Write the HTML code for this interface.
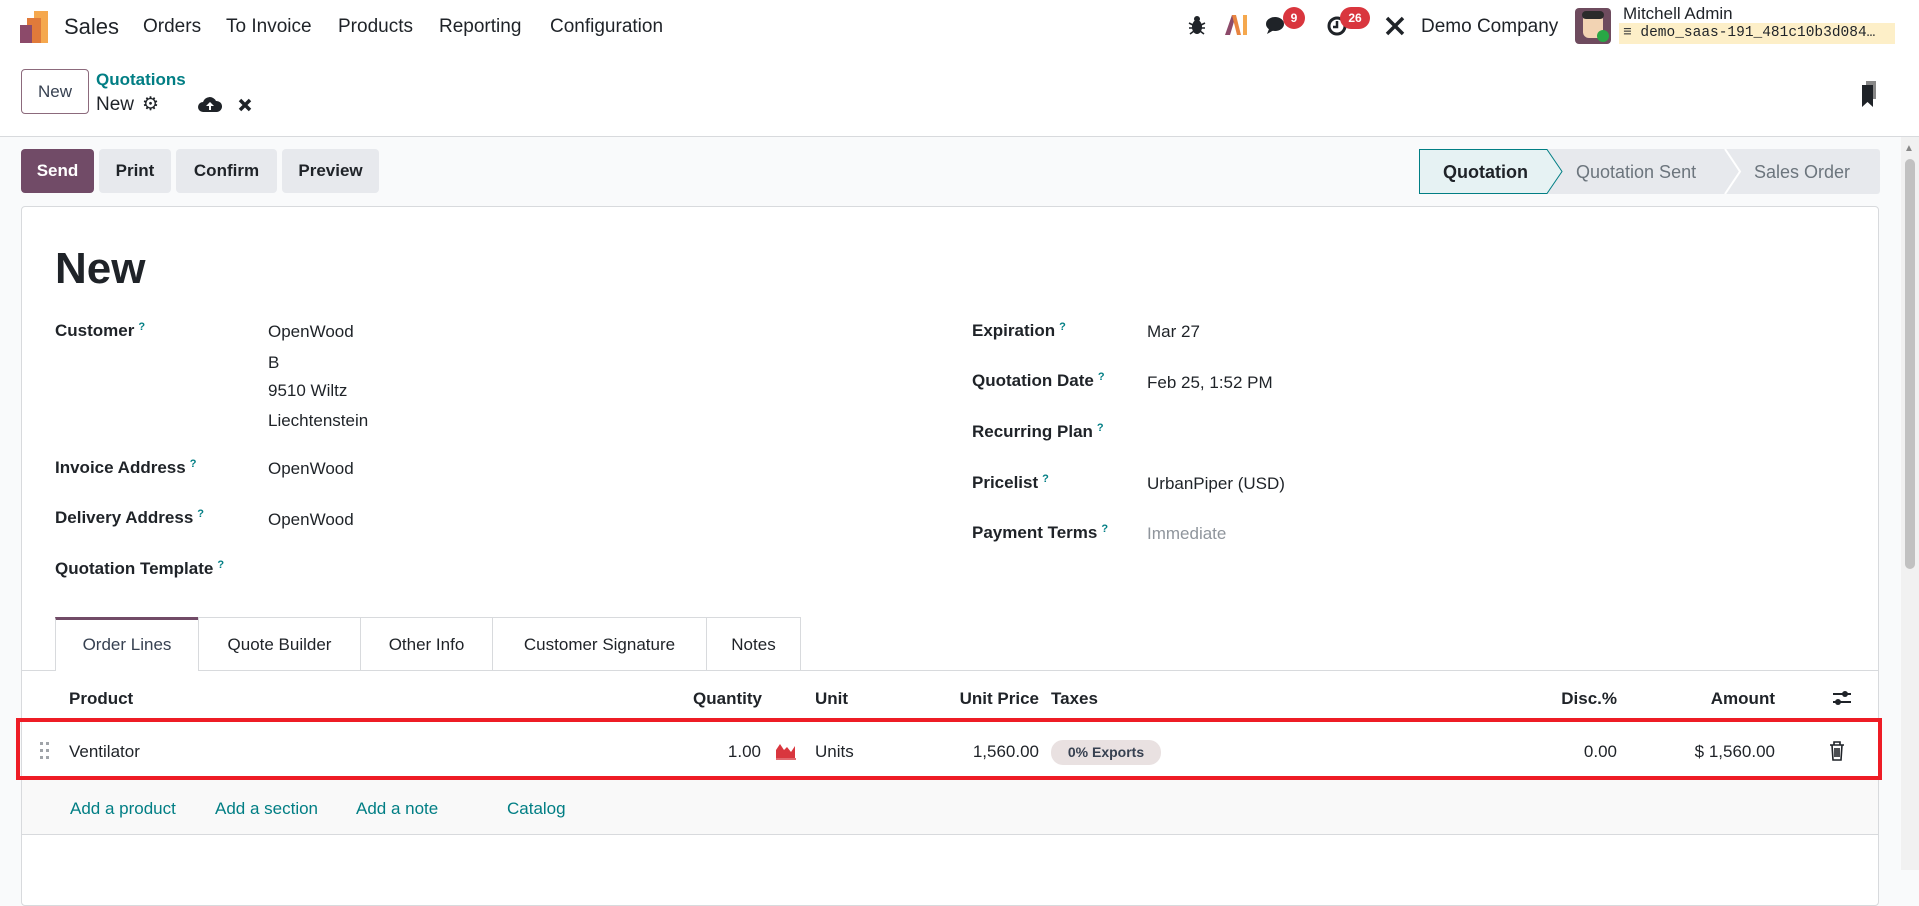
<!DOCTYPE html>
<html><head><meta charset="utf-8"><style>
*{box-sizing:border-box;margin:0;padding:0}
body{width:1919px;height:870px;overflow:hidden;background:#f9fafb;font-family:"Liberation Sans",sans-serif;font-size:17px;color:#1f2328;position:relative}
.a{position:absolute;white-space:nowrap}
.nav{position:absolute;left:0;top:0;width:1919px;height:52px;background:#fff}
.cp{position:absolute;left:0;top:52px;width:1919px;height:85px;background:#fff;border-bottom:1px solid #d8dadd}
.btn{position:absolute;top:149px;height:44px;border-radius:4px;background:#e7e9ed;font-weight:bold;font-size:17px;line-height:44px;text-align:center;color:#1f2328}
.sheet{position:absolute;left:21px;top:206px;width:1858px;height:700px;background:#fff;border:1px solid #d8dadd;border-radius:4px}
.lbl{font-weight:bold}
.q{color:#017e84;font-size:11px;font-weight:bold;vertical-align:top;margin-left:4px}
.tab{position:absolute;top:617px;height:53px;line-height:53px;text-align:center;border:1px solid #d8dadd;border-bottom:none;background:#fff;font-size:17px}
.th{font-weight:bold;top:689px}
.lnk{color:#017e84;top:799px}
</style></head><body>
<div class="nav"></div>
<svg class="a" style="left:20px;top:11px" width="30" height="32" viewBox="0 0 30 32"><rect x="14" y="0" width="14" height="32" fill="#f5a84e"/><rect x="7" y="7" width="14" height="25" fill="#e07a3a"/><rect x="0" y="14" width="12" height="18" fill="#8c4a6a"/></svg>
<div class="a" style="left:64px;top:14px;font-size:22px">Sales</div>
<div class="a" style="left:143px;top:16px;font-size:19px">Orders</div>
<div class="a" style="left:226px;top:16px;font-size:19px">To Invoice</div>
<div class="a" style="left:338px;top:16px;font-size:19px">Products</div>
<div class="a" style="left:439px;top:16px;font-size:19px">Reporting</div>
<div class="a" style="left:550px;top:16px;font-size:19px">Configuration</div>
<svg class="a" style="left:1188px;top:15px" width="18" height="20"><ellipse cx="9" cy="12" rx="5" ry="7" fill="#1f2328"/><circle cx="9" cy="4" r="3" fill="#1f2328"/><path d="M1 8l4 2M17 8l-4 2M1 13h4M17 13h-4M2 19l4-3M16 19l-4-3" stroke="#1f2328" stroke-width="1.6"/></svg>
<svg class="a" style="left:1224px;top:14px" width="24" height="22"><path d="M1 21L8 1h4l-6 20z" fill="#8c4a6a"/><path d="M8 1h4l5 20h-4z" fill="#e8843f"/><rect x="19" y="1" width="4" height="20" fill="#f5a84e"/></svg>
<svg class="a" style="left:1265px;top:14px" width="24" height="22"><ellipse cx="10" cy="10" rx="9" ry="7" fill="#1f2328"/><path d="M4 15 L2 20 L9 16Z" fill="#1f2328"/></svg>
<div class="a" style="left:1283px;top:7px;width:22px;height:22px;border-radius:11px;background:#d9363e;color:#fff;font-size:12px;font-weight:bold;text-align:center;line-height:22px">9</div>
<svg class="a" style="left:1326px;top:15px" width="22" height="22"><circle cx="11" cy="11" r="8" fill="none" stroke="#1f2328" stroke-width="3"/><path d="M11 6v6h-4" stroke="#1f2328" stroke-width="2.5" fill="none"/></svg>
<div class="a" style="left:1340px;top:7px;width:30px;height:22px;border-radius:11px;background:#d9363e;color:#fff;font-size:12px;font-weight:bold;text-align:center;line-height:22px">26</div>
<svg class="a" style="left:1384px;top:15px" width="22" height="22"><path d="M3 3l16 16M19 3L3 19" stroke="#1f2328" stroke-width="3.5"/></svg>
<div class="a" style="left:1421px;top:16px;font-size:19px">Demo Company</div>
<div class="a" style="left:1575px;top:8px;width:36px;height:36px;border-radius:4px;background:#6e4b5e;overflow:hidden"><div style="position:absolute;left:8px;top:6px;width:20px;height:24px;border-radius:6px;background:#f2d3b3"></div><div style="position:absolute;left:7px;top:3px;width:22px;height:8px;background:#2b2b2b;border-radius:4px"></div><div style="position:absolute;left:22px;top:22px;width:12px;height:12px;background:#28a745;border-radius:6px"></div></div>
<div class="a" style="left:1623px;top:4px;font-size:17px">Mitchell Admin</div>
<div class="a" style="left:1619px;top:23px;width:276px;height:21px;background:#fdefc8;font-family:'Liberation Mono',monospace;font-size:14.5px;line-height:21px;padding-left:4px;overflow:hidden">≡ demo_saas-191_481c10b3d084…</div>

<div class="cp"></div>
<div class="a" style="left:21px;top:69px;width:68px;height:45px;border:1px solid #8c6a7c;border-radius:4px;text-align:center;line-height:43px;font-size:17px;color:#374151">New</div>
<div class="a" style="left:96px;top:70px;color:#017e84;font-weight:bold;font-size:17px">Quotations</div>
<div class="a" style="left:96px;top:94px;font-size:19px">New</div>
<div class="a" style="left:142px;top:93px;font-size:19px">⚙</div>
<svg class="a" style="left:198px;top:95px" width="24" height="18"><path d="M5 17a5 5 0 0 1 0-10 7 7 0 0 1 13-1 5 5 0 0 1 1 11z" fill="#1f2328"/><path d="M12 7l-4 4h3v4h2v-4h3z" fill="#fff"/></svg>
<svg class="a" style="left:238px;top:98px" width="14" height="14"><path d="M2 2l10 10M12 2L2 12" stroke="#1f2328" stroke-width="3.5"/></svg>
<svg class="a" style="left:1860px;top:80px" width="22" height="28"><rect x="6" y="1" width="10" height="18" fill="#888"/><path d="M2 5h11v22l-5.5-5-5.5 5z" fill="#1f2328"/></svg>

<div class="btn" style="left:21px;width:73px;background:#714b67;color:#fff">Send</div>
<div class="btn" style="left:99px;width:72px">Print</div>
<div class="btn" style="left:176px;width:101px">Confirm</div>
<div class="btn" style="left:282px;width:97px">Preview</div>

<svg class="a" style="left:1419px;top:149px" width="461" height="45">
<rect x="0" y="0" width="461" height="45" rx="3" fill="#e7e9ed"/>
<path d="M0.5 0.5H128L143 22.5L128 44.5H0.5Z" fill="#e6f2f3" stroke="#017e84"/>
<path d="M306 0L321 22.5L306 45" fill="none" stroke="#fff" stroke-width="2"/>
</svg>
<div class="a" style="left:1443px;top:162px;font-weight:bold;font-size:18px">Quotation</div>
<div class="a" style="left:1576px;top:162px;font-size:18px;color:#6c757d">Quotation Sent</div>
<div class="a" style="left:1754px;top:162px;font-size:18px;color:#6c757d">Sales Order</div>

<div class="a" style="left:1901px;top:137px;width:18px;height:733px;background:#f1f1f1"></div>
<div class="a" style="left:1905px;top:159px;width:10px;height:410px;border-radius:5px;background:#c1c1c1"></div>
<div class="a" style="left:1904px;top:143px;font-size:10px;color:#888">▲</div>

<div class="sheet"></div>
<div class="a" style="left:55px;top:244px;font-size:44px;font-weight:bold">New</div>

<div class="a lbl" style="left:55px;top:321px">Customer<span class="q">?</span></div>
<div class="a" style="left:268px;top:322px">OpenWood</div>
<div class="a" style="left:268px;top:353px">B</div>
<div class="a" style="left:268px;top:381px">9510 Wiltz</div>
<div class="a" style="left:268px;top:411px">Liechtenstein</div>
<div class="a lbl" style="left:55px;top:458px">Invoice Address<span class="q">?</span></div>
<div class="a" style="left:268px;top:459px">OpenWood</div>
<div class="a lbl" style="left:55px;top:508px">Delivery Address<span class="q">?</span></div>
<div class="a" style="left:268px;top:510px">OpenWood</div>
<div class="a lbl" style="left:55px;top:559px">Quotation Template<span class="q">?</span></div>

<div class="a lbl" style="left:972px;top:321px">Expiration<span class="q">?</span></div>
<div class="a" style="left:1147px;top:322px">Mar 27</div>
<div class="a lbl" style="left:972px;top:371px">Quotation Date<span class="q">?</span></div>
<div class="a" style="left:1147px;top:373px">Feb 25, 1:52 PM</div>
<div class="a lbl" style="left:972px;top:422px">Recurring Plan<span class="q">?</span></div>
<div class="a lbl" style="left:972px;top:473px">Pricelist<span class="q">?</span></div>
<div class="a" style="left:1147px;top:474px">UrbanPiper (USD)</div>
<div class="a lbl" style="left:972px;top:523px">Payment Terms<span class="q">?</span></div>
<div class="a" style="left:1147px;top:524px;color:#8f959c">Immediate</div>

<div class="a" style="left:21px;top:670px;width:1858px;height:1px;background:#d8dadd"></div>
<div class="tab" style="left:55px;width:144px;border-top:3px solid #714b67;color:#374151;height:54px;line-height:50px">Order Lines</div>
<div class="tab" style="left:198px;width:163px">Quote Builder</div>
<div class="tab" style="left:360px;width:133px">Other Info</div>
<div class="tab" style="left:492px;width:215px">Customer Signature</div>
<div class="tab" style="left:706px;width:95px">Notes</div>

<div class="a th" style="left:69px">Product</div>
<div class="a th" style="right:1157px">Quantity</div>
<div class="a th" style="left:815px">Unit</div>
<div class="a th" style="right:880px">Unit Price</div>
<div class="a th" style="left:1051px">Taxes</div>
<div class="a th" style="right:302px">Disc.%</div>
<div class="a th" style="right:144px">Amount</div>
<svg class="a" style="left:1832px;top:688px" width="20" height="20"><path d="M1 6h18M1 14h18" stroke="#1f2328" stroke-width="2"/><circle cx="13" cy="6" r="3" fill="#1f2328"/><circle cx="6" cy="14" r="3" fill="#1f2328"/></svg>

<div class="a" style="left:22px;top:721px;width:1857px;height:57px;background:#fff;border-top:1px solid #e5e7ea"></div>
<div class="a" style="left:22px;top:779px;width:1856px;height:56px;background:#f9f9f9;border-bottom:1px solid #d8dadd"></div>
<div class="a" style="left:16px;top:718px;width:1866px;height:62px;border:4px solid #ee1c25"></div>
<svg class="a" style="left:40px;top:742px" width="10" height="18"><g fill="#a0a4a9"><rect x="0" y="0" width="3" height="3"/><rect x="6" y="0" width="3" height="3"/><rect x="0" y="7" width="3" height="3"/><rect x="6" y="7" width="3" height="3"/><rect x="0" y="14" width="3" height="3"/><rect x="6" y="14" width="3" height="3"/></g></svg>
<div class="a" style="left:69px;top:742px">Ventilator</div>
<div class="a" style="right:1158px;top:742px">1.00</div>
<svg class="a" style="left:775px;top:742px" width="22" height="18"><path d="M1 16V8l4-6 4 6 3-3 4 5 4-6v12z" fill="#d9363e"/><path d="M1 17h20" stroke="#d9363e" stroke-width="1.5"/></svg>
<div class="a" style="left:815px;top:742px">Units</div>
<div class="a" style="right:880px;top:742px">1,560.00</div>
<div class="a" style="left:1051px;top:740px;width:110px;height:25px;line-height:25px;text-align:center;font-size:14px;font-weight:bold;color:#374151;background:#e9e1e1;border-radius:12px">0% Exports</div>
<div class="a" style="right:302px;top:742px">0.00</div>
<div class="a" style="right:144px;top:742px">$ 1,560.00</div>
<svg class="a" style="left:1829px;top:741px" width="16" height="20"><path d="M1 4h14M5 4V1h6v3M3 4l1 15h8l1-15M6 7v9M8 7v9M10 7v9" stroke="#1f2328" stroke-width="1.6" fill="none"/></svg>

<div class="a lnk" style="left:70px">Add a product</div>
<div class="a lnk" style="left:215px">Add a section</div>
<div class="a lnk" style="left:356px">Add a note</div>
<div class="a lnk" style="left:507px">Catalog</div>
</body></html>
